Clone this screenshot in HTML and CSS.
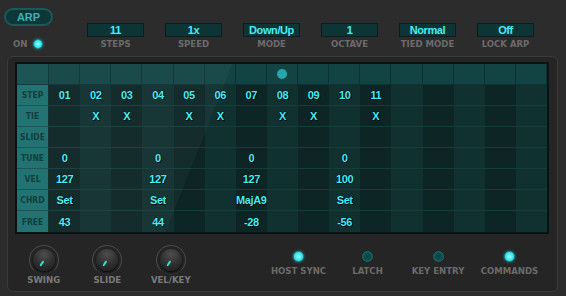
FILE: index.html
```html
<!DOCTYPE html>
<html lang="en">
<head>
    <meta charset="UTF-8">
    <meta name="viewport" content="width=device-width, initial-scale=1.0">
    <title>Arpeggiator</title>
    <link rel="stylesheet" href="styles.css">
</head>
<body>
    <div class="plugin">
        <div class="top">
            <div class="arp-col">
                <div class="arp-pill">ARP</div>
                <div class="on-row">
                    <span class="lbl">ON</span>
                    <span class="led-on"></span>
                </div>
            </div>
            <div class="params">
                <div class="param"><div class="val">11</div><div class="lbl">STEPS</div></div>
                <div class="param"><div class="val">1x</div><div class="lbl">SPEED</div></div>
                <div class="param"><div class="val">Down/Up</div><div class="lbl">MODE</div></div>
                <div class="param"><div class="val">1</div><div class="lbl">OCTAVE</div></div>
                <div class="param"><div class="val">Normal</div><div class="lbl">TIED MODE</div></div>
                <div class="param"><div class="val">Off</div><div class="lbl">LOCK ARP</div></div>
            </div>
        </div>

        <div class="panel">
            <div class="grid-frame">
                <div class="row head">
                    <span class="lab"></span>
                    <span></span><span></span><span></span><span></span><span></span><span></span><span></span>
                    <span><i class="playhead"></i></span>
                    <span></span><span></span><span></span><span></span><span></span><span></span><span></span><span></span>
                </div>
                <div class="row">
                    <span class="lab">STEP</span>
                    <span>01</span><span>02</span><span>03</span><span>04</span><span>05</span><span>06</span>
                    <span>07</span><span>08</span><span>09</span><span>10</span><span>11</span>
                    <span></span><span></span><span></span><span></span><span></span>
                </div>
                <div class="row">
                    <span class="lab">TIE</span>
                    <span></span><span>X</span><span>X</span><span></span><span>X</span><span>X</span>
                    <span></span><span>X</span><span>X</span><span></span><span>X</span>
                    <span></span><span></span><span></span><span></span><span></span>
                </div>
                <div class="row">
                    <span class="lab">SLIDE</span>
                    <span></span><span></span><span></span><span></span><span></span><span></span>
                    <span></span><span></span><span></span><span></span><span></span>
                    <span></span><span></span><span></span><span></span><span></span>
                </div>
                <div class="row">
                    <span class="lab">TUNE</span>
                    <span>0</span><span></span><span></span><span>0</span><span></span><span></span>
                    <span>0</span><span></span><span></span><span>0</span><span></span>
                    <span></span><span></span><span></span><span></span><span></span>
                </div>
                <div class="row">
                    <span class="lab">VEL</span>
                    <span>127</span><span></span><span></span><span>127</span><span></span><span></span>
                    <span>127</span><span></span><span></span><span>100</span><span></span>
                    <span></span><span></span><span></span><span></span><span></span>
                </div>
                <div class="row">
                    <span class="lab">CHRD</span>
                    <span>Set</span><span></span><span></span><span>Set</span><span></span><span></span>
                    <span>MajA9</span><span></span><span></span><span>Set</span><span></span>
                    <span></span><span></span><span></span><span></span><span></span>
                </div>
                <div class="row">
                    <span class="lab">FREE</span>
                    <span>43</span><span></span><span></span><span>44</span><span></span><span></span>
                    <span>-28</span><span></span><span></span><span>-56</span><span></span>
                    <span></span><span></span><span></span><span></span><span></span>
                </div>
            </div>

            <div class="controls">
                <div class="knobs">
                    <div class="knob-group"><div class="knob"><div class="cap"></div></div><div class="lbl">SWING</div></div>
                    <div class="knob-group"><div class="knob"><div class="cap"></div></div><div class="lbl">SLIDE</div></div>
                    <div class="knob-group"><div class="knob"><div class="cap"></div></div><div class="lbl">VEL/KEY</div></div>
                </div>
                <div class="switches">
                    <div class="switch"><span class="led lit"></span><div class="lbl">HOST SYNC</div></div>
                    <div class="switch"><span class="led"></span><div class="lbl">LATCH</div></div>
                    <div class="switch"><span class="led"></span><div class="lbl">KEY ENTRY</div></div>
                    <div class="switch"><span class="led lit"></span><div class="lbl">COMMANDS</div></div>
                </div>
            </div>
        </div>
    </div>
</body>
</html>
```

FILE: styles.css
```css
body {
    margin: 0;
    background-color: #1b1b1b;
    font-family: "Liberation Sans", Arial, sans-serif;
}
.plugin {
    width: 566px;
    height: 296px;
    background-color: #2c2c2c;
    overflow: hidden;
}
.lbl {
    font-family: "DejaVu Sans Condensed", "DejaVu Sans", sans-serif;
    font-weight: bold;
    font-size: 9.5px;
    line-height: 10px;
    color: #6b6b6b;
    white-space: nowrap;
}

/* top bar */
.top {
    display: flex;
    height: 56px;
    padding: 8px 0 0 4px;
    box-sizing: border-box;
}
.arp-col {
    width: 83px;
}
.arp-pill {
    width: 49px;
    height: 18px;
    box-sizing: border-box;
    border: 2px solid #1b5959;
    border-radius: 9px;
    background-color: #0e3737;
    color: #38b3b3;
    font-weight: bold;
    font-size: 11px;
    display: flex;
    align-items: center;
    justify-content: center;
}
.on-row {
    display: flex;
    align-items: center;
    gap: 6px;
    margin-top: 13px;
    padding-left: 9px;
}
.led-on {
    width: 10px;
    height: 10px;
    box-sizing: border-box;
    border-radius: 50%;
    border: 1px solid #1a8f95;
    background: radial-gradient(circle, #9ffcff 0, #40eef5 45%, #22c0c8 100%);
    box-shadow: 0 0 3px rgba(64, 238, 245, 0.5);
}
.params {
    display: flex;
    gap: 21px;
    padding-top: 15px;
}
.param {
    width: 57px;
    display: flex;
    flex-direction: column;
    align-items: center;
}
.val {
    width: 57px;
    height: 14px;
    box-sizing: border-box;
    border: 1px solid #0a1e1e;
    background-color: #0e3535;
    color: #42eef6;
    font-weight: bold;
    font-size: 11px;
    letter-spacing: -0.4px;
    line-height: 12px;
    text-align: center;
}
.param .lbl {
    margin-top: 2px;
}

/* main panel */
.panel {
    margin-left: 7px;
    width: 551px;
    height: 236px;
    box-sizing: border-box;
    border: 1px solid #3a3a3a;
    border-radius: 6px;
    background-color: #252525;
    padding: 5px 0 0 7px;
}
.grid-frame {
    position: relative;
    width: 534px;
    box-sizing: border-box;
    border: 2px solid #0a1212;
}
.grid-frame::after {
    content: "";
    position: absolute;
    inset: 0;
    pointer-events: none;
    background: linear-gradient(111.7deg, rgba(255, 255, 255, 0.03) 200px, rgba(255, 255, 255, 0) 200px);
}
.row {
    display: grid;
    grid-template-columns: 32px repeat(16, 1fr);
    height: 21px;
}
.row span {
    display: flex;
    align-items: center;
    justify-content: center;
    box-sizing: border-box;
    border-bottom: 1px solid #143d3d;
    color: #40eef6;
    font-weight: bold;
    font-size: 11px;
    letter-spacing: -0.4px;
    text-shadow: 0 0 1px #000, 0 0 1px #000, 1px 1px 0 #031616;
}
.row span:nth-child(even) {
    background-color: #0d2525;
}
.row span:nth-child(odd) {
    background-color: #113030;
}
.row span.lab {
    background-color: #1c6e6e;
    border-bottom: 1px solid #145252;
    border-right: 1px solid #0b2c2c;
    color: #0b3838;
    font-family: "DejaVu Sans Condensed", "DejaVu Sans", sans-serif;
    font-size: 8.5px;
    letter-spacing: 0;
    text-shadow: none;
}
.row:last-child span {
    border-bottom: none;
}
.head span:nth-child(n) {
    background-color: #134444;
    border-right: 1px solid #0d3232;
    border-bottom: 1px solid #0d3333;
}
.head span.lab {
    background-color: #154f4f;
    border-bottom: 1px solid #0d3333;
}
.playhead {
    width: 10px;
    height: 10px;
    border-radius: 50%;
    background-color: #29a6a9;
}

/* bottom controls */
.controls {
    display: flex;
    margin-top: 11px;
}
.knobs {
    display: flex;
    margin-left: -3px;
}
.knob-group {
    width: 63.5px;
    display: flex;
    flex-direction: column;
    align-items: center;
}
.knob-group .lbl {
    margin-top: 0;
    color: #7a7a7a;
}
.knob {
    width: 30px;
    height: 30px;
    box-sizing: border-box;
    border: 1px solid #4a4a4a;
    border-bottom-color: #2e2e2e;
    border-radius: 50%;
    display: flex;
    align-items: center;
    justify-content: center;
}
.cap {
    position: relative;
    width: 22px;
    height: 22px;
    border-radius: 50%;
    background: radial-gradient(circle at 50% 25%, #4d4d4d 0, #2e2e2e 55%, #1c1c1c 100%);
    box-shadow: 0 1px 2px rgba(0, 0, 0, 0.8);
}
.cap::after {
    content: "";
    position: absolute;
    left: 10px;
    top: 11px;
    width: 2px;
    height: 6px;
    border-radius: 1px;
    background-color: #34e2cf;
    transform-origin: 1px 0;
    transform: rotate(32deg) translateY(1px);
}
.switches {
    display: grid;
    grid-template-columns: 70px 68px 73px 70px;
    margin-left: 61px;
    padding-top: 6px;
}
.switch {
    display: flex;
    flex-direction: column;
    align-items: center;
}
.switch .lbl {
    margin-top: 4px;
}
.led {
    width: 11px;
    height: 11px;
    box-sizing: border-box;
    border-radius: 50%;
    border: 1px solid #166b6b;
    background: radial-gradient(circle, #0b3f3f 0, #0f5656 70%);
}
.led.lit {
    border-color: #1a9aa0;
    background: radial-gradient(circle, #a6fdff 0, #42eef6 45%, #25c4cc 100%);
    box-shadow: 0 0 3px rgba(64, 238, 245, 0.5);
}
```
